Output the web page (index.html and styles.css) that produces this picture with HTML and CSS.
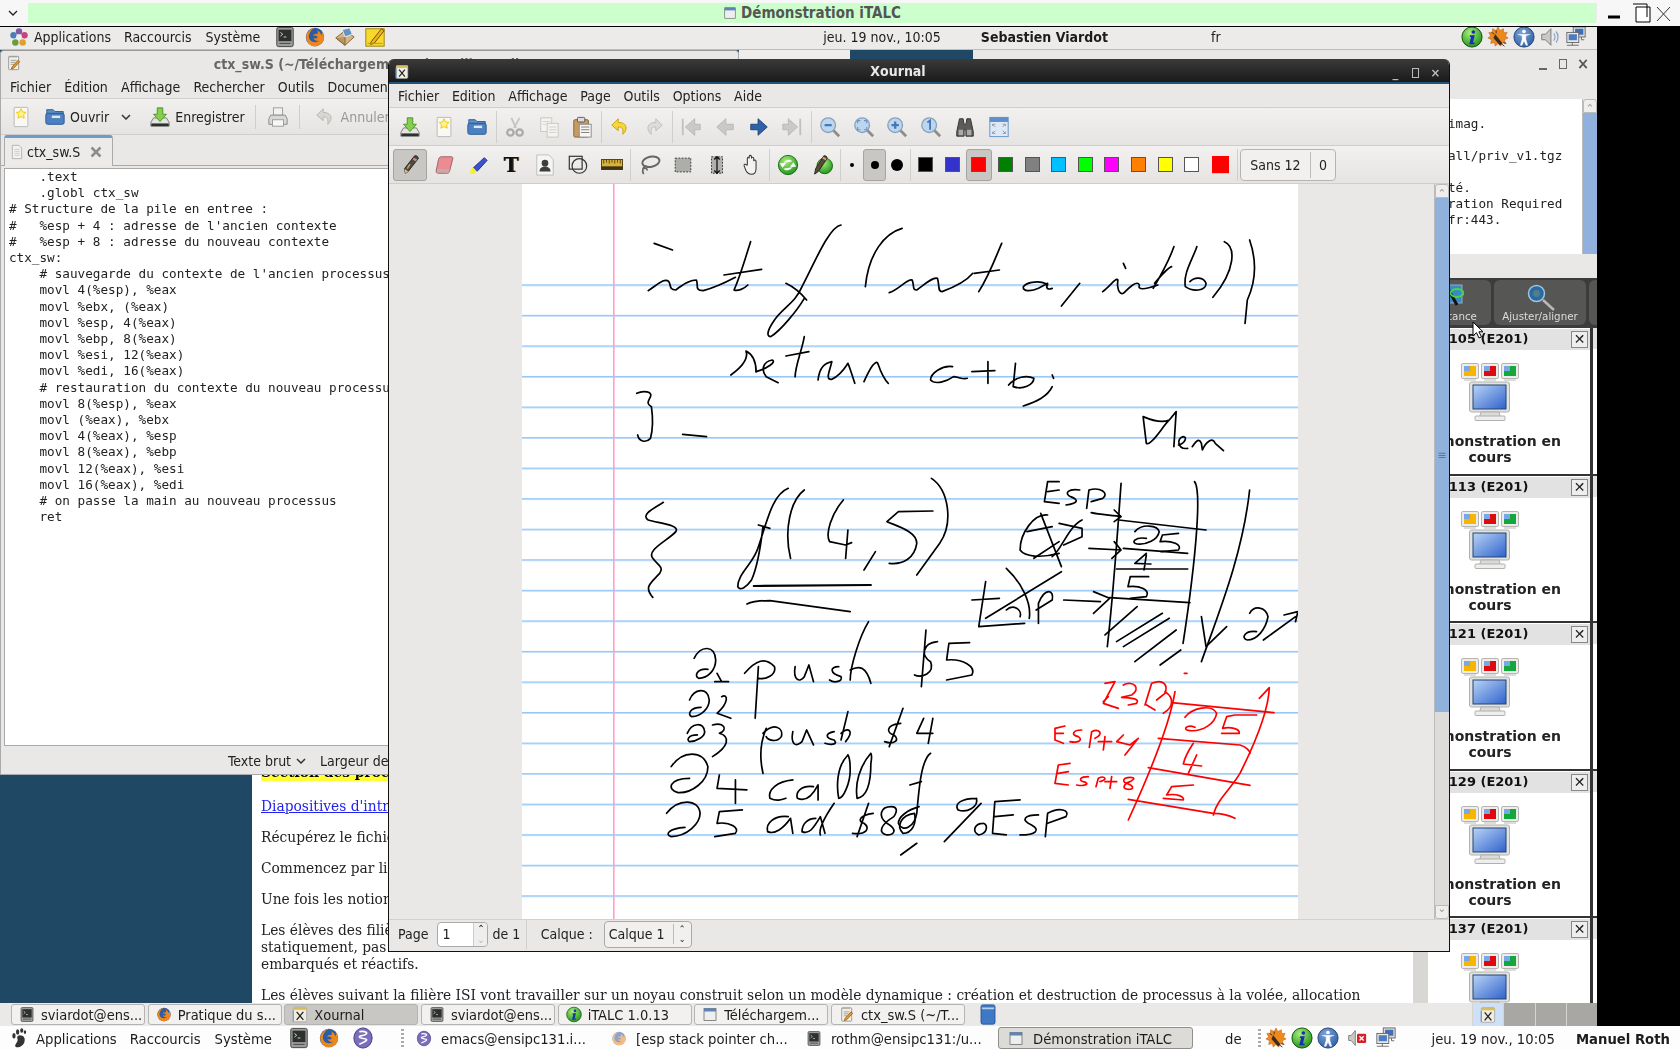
FILE: index.html
```html
<!DOCTYPE html>
<html lang="fr">
<head>
<meta charset="utf-8">
<title>Démonstration iTALC</title>
<link rel="stylesheet" href="styles.css">
</head>
<body>
<svg class="defs" aria-hidden="true">
<defs>
<linearGradient id="gBlue" x1="0" y1="0" x2="1" y2="1"><stop offset="0" stop-color="#b9d4f6"/><stop offset="1" stop-color="#2f62cc"/></linearGradient>
<radialGradient id="gGreen" cx=".4" cy=".3" r=".8"><stop offset="0" stop-color="#a8ee7a"/><stop offset="1" stop-color="#138a12"/></radialGradient>
<radialGradient id="gAcc" cx=".4" cy=".3" r=".8"><stop offset="0" stop-color="#7da4d8"/><stop offset="1" stop-color="#2a5a9e"/></radialGradient>
<symbol id="s-term" viewBox="0 0 24 24"><rect x="3" y="1.500" width="18" height="21" rx="2" fill="#9b9c98" stroke="#3f3f3f"/><rect x="5" y="4" width="14" height="12.500" fill="#2c3130"/><path d="M7 7l2.500 2L7 11M10.500 12h3" stroke="#ddd" fill="none"/><path d="M6 19h12" stroke="#444"/></symbol>
<symbol id="s-ff" viewBox="0 0 24 24"><circle cx="12" cy="12" r="10" fill="#2b5ca6"/><path d="M12 2C6 3 2 8 2.500 13c.6 5.500 5 9.500 10 9 5.500-.3 9.500-4.500 9.300-10-.2-2.500-1.200-4.300-2.400-5.800.3 1.600.1 3-.5 4-.7-2.700-2.500-4.800-4.400-5.400.8 1.600 1 3.200-.5 4.200-1.800-.5-3.600 0-4.200 1.600 1.700-.6 4.200 0 5.300 1.600-1 1.500-3.200 1.600-4.700 1 .5 2.100 3.100 3.500 5.800 3-2.200 2.100-6.200 2.100-8.800 0-2.200-2-2.700-5-1.600-7.700.5-1.300 1.600-3 2.700-4.500z" fill="#ef861c"/></symbol>
<symbol id="s-pkg" viewBox="0 0 24 24"><path d="M2 13l10-8 10 7-10 9z" fill="#d8b486" stroke="#7f6238"/><path d="M9 4l8-2 3 7-8 3z" fill="#5f94c4" stroke="#eee"/><path d="M2 13l10 8V12" fill="#bd9460" stroke="#7f6238"/></symbol>
<symbol id="s-note" viewBox="0 0 24 24"><rect x="2" y="3" width="20" height="19" fill="#f6d92a" stroke="#9a7f0a"/><path d="M8 17l11-14 3 2-11 14-4 1z" fill="#f0b020" stroke="#6a4a10"/><path d="M4 19h16" stroke="#b89a10"/></symbol>
<symbol id="s-gedit" viewBox="0 0 24 24"><rect x="4" y="2" width="15" height="20" rx="1" fill="#f4f1e4" stroke="#777"/><path d="M6 2v2M9 2v2M12 2v2M15 2v2M7 8h9M7 11h7M7 14h5" stroke="#777" fill="none"/><path d="M9 18l9-10 2.500 2-9 10-3.500 1z" fill="#ef9a1f" stroke="#7a4a10"/></symbol>
<symbol id="s-win" viewBox="0 0 24 24"><rect x="3" y="3" width="18" height="18" fill="#eee" stroke="#555"/><rect x="3" y="3" width="18" height="4.500" fill="#5b85b8"/></symbol>
<symbol id="s-apps" viewBox="0 0 24 24"><circle cx="12" cy="6" r="3.500" fill="#7d5aa8"/><circle cx="18" cy="10" r="3.500" fill="#c6437c"/><circle cx="16" cy="18" r="3.500" fill="#e0a030"/><circle cx="8" cy="18" r="3.500" fill="#6a9c3c"/><circle cx="6" cy="10" r="3.500" fill="#4a7fb5"/><circle cx="12" cy="12" r="3" fill="#eee"/></symbol>
<symbol id="s-foot" viewBox="0 0 24 24"><path d="M13 9c4 0 6 3 5 7-1 4-6 7-9 6-2-.6-1-3 .5-5 1.500-2 1-4 .5-5 0-2 1-3 3-3z" fill="#333"/><ellipse cx="6.500" cy="9.500" rx="1.800" ry="3" fill="#333"/><ellipse cx="10.500" cy="5.500" rx="1.800" ry="3" fill="#333"/><ellipse cx="15" cy="3.800" rx="1.700" ry="2.500" fill="#333"/><ellipse cx="18.500" cy="5.500" rx="1.300" ry="2" fill="#333"/></symbol>
<symbol id="s-emacs" viewBox="0 0 24 24"><ellipse cx="12" cy="12" rx="10" ry="11" fill="#7a6dba" stroke="#453a86"/><path d="M8 5c6-1 10 1 7 3s-7 1-7 3 8 1 8 3-6 3-8 5" fill="none" stroke="#fff" stroke-width="1.800"/></symbol>
<symbol id="s-info" viewBox="0 0 24 24"><circle cx="12" cy="12" r="11" fill="url(#gGreen)" stroke="#0a4a0a"/><circle cx="13.500" cy="6.500" r="2" fill="#1b2fb0"/><path d="M10 10h5l-2 8h2l-.5 2H9l2-8H9.500z" fill="#1b2fb0"/></symbol>
<symbol id="s-bug" viewBox="0 0 24 24"><path d="M12 1l2 4 4-2 0 4 4 0-2 4 3 2-4 2 1 4-4-1-1 4-3-3-3 3-1-4-4 1 1-4-4-2 3-2-2-4 4 0 0-4 4 2z" fill="#ee8a1c" stroke="#c4601a" stroke-width=".6"/><path d="M9 9l8 10-3 2-7-8z" fill="#3a2c22"/><path d="M8 9L5 7M10 8l0-3M15 19l4 3M18 18l3 1" stroke="#3a2c22"/></symbol>
<symbol id="s-acc" viewBox="0 0 24 24"><circle cx="12" cy="12" r="11" fill="url(#gAcc)" stroke="#1d3f78"/><circle cx="12" cy="6" r="2" fill="#fff"/><path d="M5 9l5 1.500v4L8 21h1.800l2.200-5 2.200 5H16l-2-6.500v-4L19 9" fill="#fff" stroke="#fff" stroke-width=".5" stroke-linejoin="round"/></symbol>
<symbol id="s-sound" viewBox="0 0 24 24"><path d="M3 9h4l6-6v18l-6-6H3z" fill="#c9c9c6" stroke="#777"/><path d="M16 8c2 2 2 6 0 8M18.500 6c3 3 3 9 0 12" stroke="#7d9dc8" fill="none" stroke-width="1.200"/></symbol>
<symbol id="s-mute" viewBox="0 0 24 24"><path d="M2 9h3l5-6v18l-5-6H2z" fill="#c9c9c6" stroke="#777"/><rect x="12" y="7" width="11" height="11" rx="1.500" fill="#d3222a"/><path d="M15 10l5 5M20 10l-5 5" stroke="#fff" stroke-width="1.600"/></symbol>
<symbol id="s-net" viewBox="0 0 24 24"><rect x="9" y="1" width="13" height="11" fill="#dcdcdc" stroke="#666"/><rect x="11" y="3" width="9" height="6.500" fill="#3f6fb4"/><rect x="2" y="7" width="13" height="11" fill="#e8e8e8" stroke="#666"/><rect x="4" y="9" width="9" height="6.500" fill="#4a7cc2"/><path d="M2 21h13M8 18v3M18 12v3h3" stroke="#666" fill="none"/></symbol>
<symbol id="s-new" viewBox="0 0 24 24"><rect x="4.500" y="1.500" width="15" height="21" rx="1" fill="#f8f8f5" stroke="#b5b5b2"/><path d="M12 3l1.800 3.500 3.700.5-2.700 2.600.7 3.700-3.500-1.800-3.400 1.800.7-3.700L6.800 7l3.700-.5z" fill="#fff48a" stroke="#f2c500"/></symbol>
<symbol id="s-open" viewBox="0 0 24 24"><path d="M3 6V4h7l2 2h9v5H3z" fill="#5d8cc6" stroke="#2d5c98"/><rect x="2" y="8" width="20" height="12" rx="2" fill="#4a80c4" stroke="#28568e"/><rect x="8" y="10" width="10" height="3.500" fill="#dbe7f3" stroke="#315f96" stroke-width=".5"/></symbol>
<symbol id="s-save" viewBox="0 0 24 24"><path d="M5 13h14l3 5v4H2v-4z" fill="#e4e4e0" stroke="#777"/><rect x="2.500" y="19" width="19" height="3" fill="#2f3130"/><path d="M9 2h6v7h4l-7 8-7-8h4z" fill="#84d04e" stroke="#4b8f23"/></symbol>
<symbol id="s-print" viewBox="0 0 24 24"><rect x="7" y="2" width="10" height="8" fill="#f2f2f0" stroke="#999"/><path d="M4 10h16l2 4v6H2v-6z" fill="#d8d8d4" stroke="#888"/><rect x="6" y="15" width="12" height="7" fill="#f7f7f5" stroke="#999"/></symbol>
<symbol id="s-undog" viewBox="0 0 24 24"><path d="M10 3L3 10l7 6v-4c4-.5 6 2 5 8 5-4 6-13-5-13z" fill="#d6d6d2" stroke="#b5b5b1"/></symbol>
<symbol id="s-undo" viewBox="0 0 24 24"><path d="M10 3L3 10l7 6v-4c4-.5 6 2 5 8 5-4 6-13-5-13z" fill="#f6d63a" stroke="#c79c10"/></symbol>
<symbol id="s-redo" viewBox="0 0 24 24"><path d="M14 3l7 7-7 6v-4c-4-.5-6 2-5 8-5-4-6-13 5-13z" fill="#dcdcd8" stroke="#bcbcb8"/></symbol>
<symbol id="s-cut" viewBox="0 0 24 24"><path d="M8 2l5 11M17 2l-6 11" stroke="#c4c4c0" stroke-width="2"/><circle cx="7" cy="18" r="3.500" fill="none" stroke="#aaa" stroke-width="2.500"/><circle cx="17" cy="18" r="3.500" fill="none" stroke="#aaa" stroke-width="2.500"/></symbol>
<symbol id="s-copy" viewBox="0 0 24 24"><rect x="3" y="2" width="12" height="15" fill="#f3f3f0" stroke="#c5c5c1"/><rect x="10" y="8" width="12" height="15" fill="#f3f3f0" stroke="#c5c5c1"/><path d="M5 6h8M5 9h4M12 12h8M12 15h8M12 18h8" stroke="#cfcfcb"/></symbol>
<symbol id="s-paste" viewBox="0 0 24 24"><rect x="3" y="4" width="16" height="19" rx="1.500" fill="#c79a62" stroke="#7f6238"/><rect x="7" y="1.500" width="8" height="5" rx="1" fill="#ddd" stroke="#555"/><rect x="9" y="9" width="13" height="14" fill="#f6f6f3" stroke="#888"/><path d="M11 12h9M11 15h9M11 18h9" stroke="#777"/></symbol>
<symbol id="s-first" viewBox="0 0 24 24"><path d="M3 3v18" stroke="#c0c0bc" stroke-width="2"/><path d="M16 3v6h6v6h-6v6L6 12z" fill="#c9c9c6" stroke="#b7b7b3"/></symbol>
<symbol id="s-prev" viewBox="0 0 24 24"><path d="M13 3v6h8v6h-8v6L3 12z" fill="#c9c9c6" stroke="#b7b7b3"/></symbol>
<symbol id="s-next" viewBox="0 0 24 24"><path d="M11 3v6H3v6h8v6l10-9z" fill="#2d62a8" stroke="#1c4278"/></symbol>
<symbol id="s-last" viewBox="0 0 24 24"><path d="M21 3v18" stroke="#c0c0bc" stroke-width="2"/><path d="M8 3v6H2v6h6v6l10-9z" fill="#c9c9c6" stroke="#b7b7b3"/></symbol>
<symbol id="s-zout" viewBox="0 0 24 24"><path d="M15 15l7 7" stroke="#8d8d8a" stroke-width="3"/><circle cx="10" cy="10" r="8" fill="#bcd6f0" stroke="#8da3ba" stroke-width="1.500"/><rect x="6" y="8.700" width="8" height="2.600" rx="1" fill="#4578b4"/></symbol>
<symbol id="s-zin" viewBox="0 0 24 24"><path d="M15 15l7 7" stroke="#8d8d8a" stroke-width="3"/><circle cx="10" cy="10" r="8" fill="#bcd6f0" stroke="#8da3ba" stroke-width="1.500"/><path d="M6 10h8M10 6v8" stroke="#4578b4" stroke-width="2.600"/></symbol>
<symbol id="s-zfit" viewBox="0 0 24 24"><path d="M15 15l7 7" stroke="#8d8d8a" stroke-width="3"/><circle cx="10" cy="10" r="8" fill="#bcd6f0" stroke="#8da3ba" stroke-width="1.500"/><path d="M5 8V5h3M12 5h3v3M15 12v3h-3M8 15H5v-3" fill="none" stroke="#6d94c2" stroke-width="1.300"/></symbol>
<symbol id="s-z1" viewBox="0 0 24 24"><path d="M15 15l7 7" stroke="#8d8d8a" stroke-width="3"/><circle cx="10" cy="10" r="8" fill="#bcd6f0" stroke="#8da3ba" stroke-width="1.500"/><path d="M8 7l3-2v10" fill="none" stroke="#4578b4" stroke-width="2"/></symbol>
<symbol id="s-bino" viewBox="0 0 24 24"><path d="M6 3h4l1 6h2l1-6h4l3 14v5h-8v-7h-2v7H3v-5z" fill="#5b5b58" stroke="#2f2f2e"/><rect x="5" y="15" width="5" height="6" fill="#aaa"/><rect x="14" y="15" width="5" height="6" fill="#aaa"/></symbol>
<symbol id="s-full" viewBox="0 0 24 24"><rect x="2" y="1.500" width="20" height="21" fill="#dfe9f5" stroke="#5f8fc7"/><rect x="2" y="1.500" width="20" height="5" fill="#5f8fc7"/><path d="M5 11V9h3M16 9h3v2M19 17v2h-3M8 19H5v-2M5 9l3 3M19 9l-3 3M19 19l-3-3M5 19l3-3" stroke="#8a9aac" fill="none"/></symbol>
<symbol id="s-pen" viewBox="0 0 24 24"><path d="M7 21l-1-5L17 2c2-.6 4 .6 4 3L10 19z" fill="#4a4a46" stroke="#222"/><path d="M16 4l4 2-2 2-3-2z" fill="#d98a7a"/><path d="M7 21l-1-5 4 3z" fill="#e8c08a"/><path d="M12 11l-3 5" stroke="#d8a848" stroke-width="1.500"/></symbol>
<symbol id="s-eraser" viewBox="0 0 24 24"><path d="M9 3h11c1.500 0 2 1 1.500 2.500L18 19c-.4 1.500-1.500 2-3 2H6c-2 0-3-1-2.500-3L6 6c.5-2 1.500-3 3-3z" fill="#ea8c92" stroke="#9b5d60"/><path d="M5 16l13 .5-1 4H4z" fill="#c9a8a8"/></symbol>
<symbol id="s-hl" viewBox="0 0 24 24"><path d="M8 15L20 4l3 3-11 12z" fill="#3a52cf" stroke="#1f2d8a"/><path d="M4 20l3-6 5 5-5 3z" fill="#f6f02c"/></symbol>
<symbol id="s-img" viewBox="0 0 24 24"><path d="M3 1h13l5 5v17H3z" fill="#f5f5f2" stroke="#bbb"/><circle cx="12" cy="10" r="3.600" fill="#3e3e3c"/><path d="M6 19c0-4 3-5.500 6-5.500s6 1.500 6 5.500z" fill="#3e3e3c"/></symbol>
<symbol id="s-shape" viewBox="0 0 24 24"><rect x="2.500" y="2.500" width="14" height="14" fill="none" stroke="#333" stroke-width="1.300"/><circle cx="13.500" cy="13" r="8" fill="none" stroke="#333" stroke-width="1.300"/></symbol>
<symbol id="s-ruler" viewBox="0 0 24 12"><rect x=".5" y=".5" width="23" height="11" fill="#d8b23a" stroke="#4a3c10"/><path d="M3 1v4M6 1v3M9 1v4M12 1v3M15 1v4M18 1v3M21 1v4" stroke="#5a4810" fill="none"/><rect x=".5" y="8" width="23" height="3.500" fill="#3d3512"/></symbol>
<symbol id="s-lasso" viewBox="0 0 24 24"><ellipse cx="13" cy="8.500" rx="9.500" ry="5.500" fill="none" stroke="#666" stroke-width="2.200" transform="rotate(-12 13 8.500)"/><path d="M8 13c-4 1-5 5-3 9M5 16c2-1 4 0 4 2" fill="none" stroke="#666" stroke-width="1.800"/></symbol>
<symbol id="s-rect" viewBox="0 0 24 24"><rect x="3.500" y="4.500" width="17" height="15" fill="#adadaa" stroke="#333" stroke-dasharray="2 1.500"/></symbol>
<symbol id="s-vsp" viewBox="0 0 24 24"><rect x="6" y="3" width="12" height="18" fill="#b0b0ad" stroke="#333" stroke-dasharray="2 1.500"/><path d="M12 3v18M9 6l3-3 3 3M9 18l3 3 3-3" fill="none" stroke="#111" stroke-width="1.400"/></symbol>
<symbol id="s-hand" viewBox="0 0 24 24"><path d="M8 12V5c0-2 2-2 2 0V3c0-2 2.500-2 2.500 0v2c0-2 2.500-2 2.500 0v3c0-2 2.500-2 2.500 0v8c0 4-2 6-5 6-4 0-5-2-6-4l-2-5c-.5-2 1.500-2.500 2.500-1z" fill="#f2f2f0" stroke="#333" stroke-width="1.100"/></symbol>
<symbol id="s-ref" viewBox="0 0 24 24"><circle cx="12" cy="12" r="10.500" fill="url(#gGreen)" stroke="#136a13"/><path d="M17 8c-3-3-8-2-10 2h3l-4 5-3-5h2M7 16c3 3 8 2 10-2h-3l4-5 3 5h-2" fill="#fff"/></symbol>
<symbol id="s-pend" viewBox="0 0 24 24"><circle cx="15" cy="13" r="8.500" fill="url(#gGreen)" stroke="#136a13"/><path d="M4 22l1-6L14 2c2-.5 4 .8 3.500 3L8 19z" fill="#5a4a36" stroke="#222"/><path d="M13 4l3.500 2" stroke="#e0a070" stroke-width="2"/></symbol>
<symbol id="s-xapp" viewBox="0 0 24 24"><rect x="2" y="1" width="20" height="22" rx="2" fill="#f0ede0" stroke="#999"/><rect x="2" y="1" width="20" height="4" fill="#d8bd5a"/><path d="M7 8l10 12M17 8L7 20" stroke="#222" stroke-width="2"/><path d="M2 6v17" stroke="#7aa0d0" stroke-width="2"/></symbol>
<symbol id="s-trash" viewBox="0 0 18 24"><rect x="1" y="1" width="16" height="22" rx="2" fill="#3f79c6" stroke="#245494"/><rect x="2" y="4" width="14" height="2" fill="#b5cfee"/></symbol>
<symbol id="s-doc" viewBox="0 0 24 24"><path d="M5 2h10l4 4v16H5z" fill="#f2f2ef" stroke="#999"/><path d="M8 8h8M8 11h8M8 14h8M8 17h8" stroke="#bbb"/></symbol>
<symbol id="s-mag" viewBox="0 0 30 30"><path d="M17 17l11 10" stroke="#b9b9b6" stroke-width="2.500"/><circle cx="10.500" cy="10.500" r="8" fill="#2b6aa0" stroke="#9fc4e0" stroke-width="1.500"/><circle cx="10.500" cy="10.500" r="3.500" fill="#4f7f8a"/></symbol>
<symbol id="s-asst" viewBox="0 0 16 28"><rect x="0" y="2" width="14" height="18" fill="#3a8ac0" stroke="#9ac"/><path d="M0 6l9 16" stroke="#111" stroke-width="3"/><ellipse cx="9" cy="10" rx="6.500" ry="4" fill="none" stroke="#43d44b" stroke-width="1.800"/></symbol>
<symbol id="s-mon" viewBox="0 0 58 60"><g stroke="#b5b5b2" stroke-width="1"><rect x=".5" y=".5" width="17" height="15" rx="1.500" fill="#ececea"/><rect x="20.500" y=".5" width="17" height="15" rx="1.500" fill="#ececea"/><rect x="40.500" y=".5" width="17" height="15" rx="1.500" fill="#ececea"/></g><rect x="3" y="3" width="12" height="10" fill="#f7b500"/><rect x="3" y="3" width="6" height="5" fill="#7aa7e6"/><rect x="23" y="3" width="12" height="10" fill="#dd0b10"/><rect x="23" y="3" width="6" height="5" fill="#7aa7e6"/><rect x="43" y="3" width="12" height="10" fill="#12a83b"/><rect x="43" y="3" width="6" height="5" fill="#7aa7e6"/><path d="M3 16h12v2H3zM23 16h12v2H23zM43 16h12v2H43z" fill="#ddd"/><rect x="8.500" y="19" width="40" height="30" rx="2" fill="#e2e2e0" stroke="#b0b0ad"/><rect x="12" y="22" width="33" height="24" fill="url(#gBlue)" stroke="#24456e"/><path d="M20 49h18l2 7H18z" fill="#dadad8" stroke="#b0b0ad"/><rect x="14" y="53" width="30" height="4.500" rx="1" fill="#eee" stroke="#b0b0ad"/></symbol>
</defs>
</svg>

<div class="screen">
  <header class="vnc">
    <svg class="vnc-chev" viewBox="0 0 10 6"><path d="M1 1l4 4 4-4" fill="none" stroke="#222" stroke-width="1.300"/></svg>
    <div class="vnc-title"><svg class="vnc-ic"><use href="#s-win"/></svg><b>Démonstration iTALC</b></div>
    <svg class="vnc-btns" viewBox="0 0 80 26"><path d="M0 4v17" stroke="#ddd"/><path d="M12 18h12" stroke="#000" stroke-width="3"/><path d="M37 5h14v13M40 8h14v15H40z" fill="#fff" stroke="#000"/><path d="M61 8l13 14M74 8L61 22" stroke="#333" fill="none"/></svg>
  </header>

  <main class="remote">
    <div class="panel ptop">
      <svg class="pi ml8"><use href="#s-apps"/></svg>
      <span class="ml4">Applications</span>
      <span class="ml13">Raccourcis</span>
      <span class="ml14">Système</span>
      <svg class="pi ml14"><use href="#s-term"/></svg>
      <svg class="pi ml8"><use href="#s-ff"/></svg>
      <svg class="pi ml8"><use href="#s-pkg"/></svg>
      <svg class="pi ml8"><use href="#s-note"/></svg>
      <span class="ptime">jeu. 19 nov., 10:05</span>
      <b class="puser">Sebastien Viardot</b>
      <span class="plang">fr</span>
      <svg class="pi pinfo"><use href="#s-info"/></svg>
      <svg class="pi ml4"><use href="#s-bug"/></svg>
      <svg class="pi ml4"><use href="#s-acc"/></svg>
      <svg class="pi ml4"><use href="#s-sound"/></svg>
      <svg class="pi ml4"><use href="#s-net"/></svg>
    </div>

    <div class="workspace">
      <section class="win italc">
        <div class="italc-bar">
          <div class="italc-btn b1"><svg class="asst"><use href="#s-asst"/></svg><span>Assistance</span></div>
          <div class="italc-btn b2"><svg class="mag"><use href="#s-mag"/></svg><span>Ajuster/aligner</span></div>
          <div class="italc-btn b3"></div>
        </div>
        <div class="tiles">
          <article class="tile"><header>ensipt105 (E201)<i class="tx">✕</i></header><div class="tbody"><svg class="mon"><use href="#s-mon"/></svg><b>Démonstration en cours</b></div></article>
          <article class="tile"></article>
          <article class="tile"><header>ensipt113 (E201)<i class="tx">✕</i></header><div class="tbody"><svg class="mon"><use href="#s-mon"/></svg><b>Démonstration en cours</b></div></article>
          <article class="tile"></article>
          <article class="tile"><header>ensipt121 (E201)<i class="tx">✕</i></header><div class="tbody"><svg class="mon"><use href="#s-mon"/></svg><b>Démonstration en cours</b></div></article>
          <article class="tile"></article>
          <article class="tile"><header>ensipt129 (E201)<i class="tx">✕</i></header><div class="tbody"><svg class="mon"><use href="#s-mon"/></svg><b>Démonstration en cours</b></div></article>
          <article class="tile"></article>
          <article class="tile"><header>ensipt137 (E201)<i class="tx">✕</i></header><div class="tbody"><svg class="mon"><use href="#s-mon"/></svg><b>Démonstration en cours</b></div></article>
          <article class="tile"></article>
        </div>
      </section>

      <section class="win browser">
        <div class="b-content">
          <h3><mark>Section des processus</mark></h3>
          <p><a href="#">Diapositives d'introduction</a></p>
          <p>Récupérez le fichier</p>
          <p>Commencez par lire</p>
          <p>Une fois les notions</p>
          <p>Les élèves des filières<br>statiquement, pas<br>embarqués et réactifs.</p>
          <p>Les élèves suivant la filière ISI vont travailler sur un noyau construit selon un modèle dynamique : création et destruction de processus à la volée, allocation</p>
        </div>
        <div class="b-scroll"></div>
      </section>

      <div class="win strip"></div>

      <section class="win term">
        <div class="term-head"><i class="wb mn"></i><i class="wb sq"></i><span class="wb xb">×</span></div>
        <div class="term-body">
          <pre>imag.

all/priv_v1.tgz

té.
ration Required
fr:443.</pre>
          <div class="scroll-t"><span class="sb-btn">⌃</span><span class="sb-thumb"></span></div>
        </div>
      </section>

      <section class="win gedit">
        <div class="g-title"><svg class="gi"><use href="#s-gedit"/></svg><b>ctx_sw.S (~/Téléchargements/install) - gedit</b></div>
        <nav class="g-menu"><span>Fichier</span><span>Édition</span><span>Affichage</span><span>Rechercher</span><span>Outils</span><span>Documents</span></nav>
        <div class="g-tools">
          <svg class="ti"><use href="#s-new"/></svg>
          <svg class="ti g-open"><use href="#s-open"/></svg><span class="g-l1">Ouvrir</span>
          <svg class="g-ch" viewBox="0 0 10 6"><path d="M1 1l4 4 4-4" fill="none" stroke="#333" stroke-width="1.500"/></svg>
          <svg class="ti g-sv"><use href="#s-save"/></svg><span class="g-l2">Enregistrer</span>
          <i class="sep g-s1"></i>
          <svg class="ti g-pr"><use href="#s-print"/></svg>
          <i class="sep g-s2"></i>
          <svg class="ti g-un"><use href="#s-undog"/></svg><span class="g-l3">Annuler</span>
        </div>
        <div class="g-tabs"><div class="g-tab"><svg class="tabi"><use href="#s-doc"/></svg><span>ctx_sw.S</span><svg class="tabx" viewBox="0 0 12 12"><path d="M1.500 1.500l9 9M10.500 1.500l-9 9" stroke="#8d8d8a" stroke-width="2.500"/></svg></div></div>
        <div class="g-edit"><pre>    .text
    .globl ctx_sw
# Structure de la pile en entree :
#   %esp + 4 : adresse de l'ancien contexte
#   %esp + 8 : adresse du nouveau contexte
ctx_sw:
    # sauvegarde du contexte de l'ancien processus
    movl 4(%esp), %eax
    movl %ebx, (%eax)
    movl %esp, 4(%eax)
    movl %ebp, 8(%eax)
    movl %esi, 12(%eax)
    movl %edi, 16(%eax)
    # restauration du contexte du nouveau processus
    movl 8(%esp), %eax
    movl (%eax), %ebx
    movl 4(%eax), %esp
    movl 8(%eax), %ebp
    movl 12(%eax), %esi
    movl 16(%eax), %edi
    # on passe la main au nouveau processus
    ret</pre></div>
        <div class="g-status"><span>Texte brut</span><svg class="g-ch2" viewBox="0 0 10 6"><path d="M1 1l4 4 4-4" fill="none" stroke="#333" stroke-width="1.500"/></svg><span class="g-wd">Largeur de tabulation : 8</span></div>
      </section>

      <section class="win xournal">
        <div class="x-title"><svg class="xi"><use href="#s-xapp"/></svg><b>Xournal</b><div class="x-wb"><span>_</span><span class="sq"></span><span>×</span></div></div>
        <nav class="x-menu"><span>Fichier</span><span>Edition</span><span>Affichage</span><span>Page</span><span>Outils</span><span>Options</span><span>Aide</span></nav>
        <div class="x-tb t1">
          <button class="tb"><svg><use href="#s-save"/></svg></button><button class="tb"><svg><use href="#s-new"/></svg></button><button class="tb"><svg><use href="#s-open"/></svg></button><i class="vs"></i>
          <button class="tb"><svg><use href="#s-cut"/></svg></button><button class="tb"><svg><use href="#s-copy"/></svg></button><button class="tb"><svg><use href="#s-paste"/></svg></button><i class="vs"></i>
          <button class="tb"><svg><use href="#s-undo"/></svg></button><button class="tb"><svg><use href="#s-redo"/></svg></button><i class="vs"></i>
          <button class="tb"><svg><use href="#s-first"/></svg></button><button class="tb"><svg><use href="#s-prev"/></svg></button><button class="tb"><svg><use href="#s-next"/></svg></button><button class="tb"><svg><use href="#s-last"/></svg></button><i class="vs"></i>
          <button class="tb"><svg><use href="#s-zout"/></svg></button><button class="tb"><svg><use href="#s-zfit"/></svg></button><button class="tb"><svg><use href="#s-zin"/></svg></button><button class="tb"><svg><use href="#s-z1"/></svg></button><button class="tb"><svg><use href="#s-bino"/></svg></button><button class="tb"><svg><use href="#s-full"/></svg></button>
        </div>
        <div class="x-tb t2">
          <button class="tb on"><svg><use href="#s-pen"/></svg></button><button class="tb"><svg><use href="#s-eraser"/></svg></button><button class="tb"><svg><use href="#s-hl"/></svg></button><button class="tb tt">T</button><button class="tb"><svg><use href="#s-img"/></svg></button><button class="tb"><svg><use href="#s-shape"/></svg></button><button class="tb"><svg class="rul"><use href="#s-ruler"/></svg></button><i class="vs"></i>
          <button class="tb"><svg><use href="#s-lasso"/></svg></button><button class="tb"><svg><use href="#s-rect"/></svg></button><button class="tb"><svg><use href="#s-vsp"/></svg></button><button class="tb"><svg><use href="#s-hand"/></svg></button><i class="vs"></i>
          <button class="tb"><svg><use href="#s-ref"/></svg></button><button class="tb"><svg><use href="#s-pend"/></svg></button><i class="vs narrow"></i>
          <button class="dotb"><i class="dot d1"></i></button><button class="dotb on"><i class="dot d2"></i></button><button class="dotb"><i class="dot d3"></i></button><i class="vs"></i>
          <button class="col"><i class="c-black"></i></button><button class="col"><i class="c-blue"></i></button><button class="col on"><i class="c-red"></i></button><button class="col"><i class="c-green"></i></button><button class="col"><i class="c-gray"></i></button><button class="col"><i class="c-cyan"></i></button><button class="col"><i class="c-lime"></i></button><button class="col"><i class="c-mag"></i></button><button class="col"><i class="c-orange"></i></button><button class="col"><i class="c-yellow"></i></button><button class="col"><i class="c-white"></i></button>
          <button class="col bigc"><i class="c-red"></i></button><i class="vs"></i>
          <button class="fontb"><span>Sans 12</span><em>0</em></button>
        </div>
        <div class="x-view">
          <div class="x-canvas">
            <svg class="page" viewBox="522 184 776 736">
              <defs><pattern id="rl" x="522" y="284.300" width="776" height="30.550" patternUnits="userSpaceOnUse"><rect width="776" height="1.600" fill="#96c7f7"/></pattern></defs>
              <rect x="522" y="184" width="776" height="736" fill="#fff"/>
              <rect x="522" y="284" width="776" height="636" fill="url(#rl)"/>
              <rect x="613" y="184" width="1.600" height="736" fill="#ff9fce"/>
              <g class="ink" transform="translate(600 220) scale(.4591 .3333)">
                <path d="M118 70L158 90"/>
                <path d="M105 212C125 195 140 172 150 185C155 195 150 210 165 210C180 195 195 180 210 180C215 195 205 212 225 212C245 205 270 190 295 172"/>
                <path d="M328 65C320 100 305 170 292 210C300 215 315 205 322 195M270 165L352 148"/>
                <path d="M525 15C500 20 470 120 440 200C425 250 400 260 380 300C360 340 365 350 372 350C395 330 430 270 445 235M405 190C420 200 435 215 450 240"/>
                <path d="M658 25C620 40 585 100 578 200"/>
                <path d="M630 218C650 210 670 175 680 180C685 200 680 210 690 210C710 190 725 170 735 175C740 195 735 215 745 215C775 200 800 180 812 160"/>
                <path d="M875 70C865 100 850 160 825 215M815 160L870 150"/>
                <path d="M975 195C960 180 930 185 922 200C920 215 940 215 955 205L975 190C970 205 975 210 985 205"/>
                <path d="M1045 190L1005 258"/>
                <path d="M1095 215C1110 200 1125 170 1128 180C1125 200 1130 225 1140 220C1155 200 1170 180 1175 195C1170 210 1185 210 1215 195M1140 130L1145 145"/>
                <path d="M1250 80C1240 120 1220 170 1205 205M1208 190C1220 170 1235 145 1245 140"/>
                <path d="M1300 80C1290 120 1270 160 1275 200C1290 215 1320 215 1320 190C1315 170 1295 170 1285 185"/>
                <path d="M1360 65C1385 80 1385 150 1335 232"/>
                <path d="M1415 60C1430 120 1430 180 1410 240L1405 310"/>
                <path d="M285 465C305 445 325 420 318 393C335 405 340 430 340 455"/>
                <path d="M340 455C365 445 385 425 375 420C355 425 350 450 362 470L388 488"/>
                <path d="M445 350C440 390 425 440 425 470M405 408L455 395"/>
                <path d="M475 480C478 440 490 430 505 425C500 455 490 480 505 478C525 465 535 440 540 430C545 445 550 470 555 490"/>
                <path d="M575 485C590 440 600 420 605 430C610 450 620 480 628 490"/>
                <path d="M768 440C745 435 720 460 720 480C730 495 755 485 770 470C780 470 790 480 800 475"/>
                <path d="M810 455L860 452M845 425L845 490"/>
                <path d="M905 430L900 500C920 510 945 495 945 475C930 465 905 470 890 495"/>
                <path d="M985 465L988 475M985 500C975 530 950 545 922 558"/>
                <path d="M80 520C95 510 115 515 110 530C105 545 100 550 112 560C115 590 115 630 110 655C100 670 85 665 82 645"/>
                <path d="M180 643L232 650"/>
                <path d="M1183 590C1200 600 1225 610 1240 600L1255 575L1250 680M1183 590L1190 670C1200 680 1225 620 1240 600"/>
                <path d="M1260 675C1275 670 1280 650 1270 650C1255 655 1258 690 1280 685"/>
                <path d="M1290 680C1300 660 1305 655 1310 670L1312 690C1320 665 1335 650 1340 670L1358 692"/>
              </g>
              <g class="ink" transform="translate(600 470) scale(.4591 .3333)">
                <path d="M138 97C110 120 90 135 105 150C130 160 175 165 165 185C150 210 100 240 115 265C125 285 140 290 130 310C110 340 95 350 115 382"/>
                <path d="M410 55C375 75 365 150 345 230C335 280 300 310 300 350C305 365 320 350 330 330C340 300 350 230 355 170M345 165L370 175"/>
                <path d="M445 60C415 90 400 180 415 265"/>
                <path d="M530 90C505 130 490 190 500 215L535 225L548 218M540 180L535 265"/>
                <path d="M600 245L575 300"/>
                <path d="M725 123L650 125L625 155C650 170 690 185 690 220C685 265 660 285 630 280"/>
                <path d="M722 25C760 60 770 160 740 220L690 315"/>
                <path d="M335 348L590 345" class="thick"/>
                <path d="M320 402C330 395 345 392 370 392L545 425"/>
                <path d="M1000 35L975 35L968 95L1000 100M975 65L1000 60"/>
                <path d="M1045 60C1020 55 1010 70 1025 80C1045 90 1040 100 1015 105"/>
                <path d="M1060 115L1065 60C1090 50 1110 70 1095 85L1070 95"/>
                <path d="M1135 40C1130 130 1120 350 1105 530"/>
                <path d="M1295 35C1310 60 1300 250 1270 520"/>
                <path d="M1415 60C1400 250 1350 420 1310 575"/>
                <path d="M1070 128C1090 135 1120 135 1135 140M1120 120L1135 140L1120 155"/>
                <path d="M1130 150L1320 180"/>
                <path d="M1165 185C1180 160 1215 165 1218 185C1215 210 1190 225 1170 222C1155 218 1165 200 1190 205"/>
                <path d="M1260 190L1225 195L1220 215C1245 210 1270 225 1260 240L1222 245"/>
                <path d="M1140 235L1280 250"/>
                <path d="M1190 250L1165 280L1200 282M1190 255L1185 300"/>
                <path d="M1125 297L1280 297"/>
                <path d="M1195 320L1155 320L1150 350C1175 345 1200 360 1190 380L1155 385"/>
                <path d="M1110 383L1285 398"/>
                <path d="M1065 235L1135 240M1120 215L1135 240L1115 265"/>
                <path d="M975 135C945 130 915 190 915 240C925 260 960 265 1000 250M930 185L985 170"/>
                <path d="M960 130L1005 290M1050 150C1020 170 1005 240 985 260M1000 160L1050 175L1050 200L1010 225M945 265L1000 215"/>
                <path d="M840 335L825 470L925 460M810 390L870 385"/>
                <path d="M885 295C920 340 940 400 935 445M840 445L1005 305M885 420C900 400 920 420 915 440"/>
                <path d="M955 460L955 400C970 350 990 360 985 390L950 420"/>
                <path d="M1010 390L1090 395M1075 365L1110 385L1075 430"/>
                <path d="M1100 495L1170 410M1125 515L1225 430M1140 530L1240 445M1165 575L1255 480M1220 585L1265 540"/>
                <path d="M1310 440L1320 530L1365 470"/>
                <path d="M1415 430C1425 405 1450 410 1455 440C1450 480 1430 510 1410 510C1395 505 1405 480 1430 485M1445 510L1515 440M1490 435L1520 425L1515 455"/>
                <path d="M205 565C220 525 250 525 252 570C252 600 235 625 215 625C205 620 210 595 235 598M255 610L265 635M250 635L280 635"/>
                <path d="M315 610C340 570 360 560 380 590C385 615 360 630 345 625M345 590L338 745"/>
                <path d="M425 590C420 630 435 640 445 620L455 585L465 635"/>
                <path d="M520 590C500 590 500 610 525 620C530 635 510 640 500 630"/>
                <path d="M585 455C565 500 545 590 545 630M545 600C565 585 580 590 590 640"/>
                <path d="M710 480L700 650M735 515C700 520 700 560 720 575C730 610 700 625 685 615"/>
                <path d="M805 518L760 520L755 570C790 565 820 590 810 615L755 630"/>
                <path d="M195 690C205 655 235 650 238 690C238 715 220 740 200 740C190 735 195 712 220 712M265 680C280 670 280 700 255 730L285 745"/>
                <path d="M190 790C200 758 225 755 228 785C228 800 210 815 195 815C188 810 192 795 212 795M245 765C270 755 280 780 260 790C285 800 280 830 245 860"/>
                <path d="M355 790C380 755 400 775 395 800C385 820 365 810 362 800M362 775C345 830 350 880 355 910"/>
                <path d="M420 785C415 820 425 835 440 815L450 780L465 825"/>
                <path d="M510 785C490 790 490 805 510 810C520 825 500 825 490 820"/>
                <path d="M540 725L525 810M525 790C540 770 555 780 535 815"/>
                <path d="M660 715L630 830M655 760C620 765 625 790 640 795C655 810 640 825 620 815"/>
                <path d="M705 745L690 790L725 790M725 745L715 820"/>
                <path d="M155 890C180 840 225 840 235 890C235 935 200 970 170 968C145 960 150 925 195 925"/>
                <path d="M260 915L255 955L320 960M295 930L295 1000"/>
                <path d="M420 930C385 935 365 960 370 985C385 995 395 990 405 985"/>
                <path d="M465 950C440 945 425 965 430 985C445 995 460 985 475 945L475 990"/>
                <path d="M540 855C515 890 515 950 520 985C530 985 545 940 545 900C545 880 545 865 540 855"/>
                <path d="M590 850C565 890 555 940 560 985C585 980 590 930 590 880C592 865 592 855 590 850"/>
                <path d="M720 850C700 870 695 950 690 1030C685 1070 660 1090 650 1060C650 1040 670 1020 695 1010M675 945L700 935"/>
                <path d="M145 1030C170 985 215 985 218 1030C218 1060 190 1100 155 1100C140 1095 150 1075 185 1072"/>
                <path d="M310 1020L260 1025L255 1060C285 1055 305 1075 295 1090L250 1100"/>
                <path d="M410 1040C380 1035 360 1060 365 1085C380 1095 400 1075 415 1045L420 1090"/>
                <path d="M470 1045C450 1045 440 1065 440 1085C455 1095 465 1075 480 1040L490 1090M510 1000C490 1040 475 1075 480 1095"/>
                <path d="M585 1000L560 1100M595 1030C565 1035 560 1055 575 1060C590 1075 580 1095 550 1090"/>
                <path d="M635 1010C610 1010 605 1040 625 1060C650 1080 640 1095 625 1095C605 1090 610 1065 640 1040C650 1020 645 1010 635 1010"/>
                <path d="M685 1030C655 1035 645 1070 660 1090C680 1090 690 1060 685 1030"/>
                <path d="M655 1155L690 1120"/>
                <path d="M820 985C790 985 770 1000 780 1020C800 1030 825 1010 820 985M750 1115L830 1000M835 1060C815 1060 810 1085 825 1095C845 1090 845 1065 835 1060"/>
                <path d="M915 990L860 995L855 1090L885 1095M860 1040L900 1035"/>
                <path d="M955 1035C925 1035 915 1050 940 1065C960 1080 950 1095 915 1095"/>
                <path d="M970 1100L975 1030C1000 1010 1025 1020 1015 1040L975 1060"/>
              </g>
              <g class="ink red" transform="translate(1000 640) scale(.3333)">
                <path d="M345 125L310 190L355 205M315 130L345 125M310 185L325 170"/>
                <path d="M370 135C400 120 425 145 395 165L365 172C395 175 420 175 410 190L385 195"/>
                <path d="M435 195L455 130C490 115 505 135 495 160L470 180M465 210L440 195"/>
                <path d="M495 155C520 170 525 200 490 220"/>
                <path d="M525 155C510 250 440 420 385 540"/>
                <path d="M515 188L822 218"/>
                <path d="M778 175L808 143C805 220 760 320 720 400C690 450 650 480 640 525"/>
                <path d="M555 232C575 205 635 190 650 220C645 250 610 275 570 272C545 270 560 252 585 262"/>
                <path d="M770 225L705 225L680 230L668 265C690 260 720 265 718 280L665 280"/>
                <path d="M475 295L720 315C740 320 750 335 750 340"/>
                <path d="M580 310C570 325 555 350 550 372L605 378M590 345L565 400"/>
                <path d="M445 383L750 436"/>
                <path d="M580 435L515 440L500 465C530 460 555 470 550 480L490 475"/>
                <path d="M385 478L640 520C670 520 695 530 705 535"/>
                <path d="M195 258L165 265L165 300L190 310M165 280L190 280"/>
                <path d="M245 270C220 270 210 285 235 290C250 300 235 310 210 305"/>
                <path d="M268 322L275 275C295 265 315 280 285 295"/>
                <path d="M295 305L335 305M315 290L310 330"/>
                <path d="M370 285L350 305L390 315L415 295L375 345"/>
                <path d="M210 370L175 375L165 430L205 435M175 400L205 395"/>
                <path d="M265 410C240 410 235 420 250 425C270 430 260 440 230 435"/>
                <path d="M288 440L295 415C315 405 325 420 300 425"/>
                <path d="M315 425L350 425M335 410L330 445"/>
                <path d="M390 412C370 412 365 425 380 430C400 436 405 448 385 448C365 448 370 432 390 425C405 418 405 412 390 412"/>
                <path d="M553 100h8"/>
              </g>
            </svg>
          </div>
          <div class="x-scroll"><span class="sb-btn">⌃</span><span class="x-track"><span class="x-thumb">≡</span></span><span class="sb-btn dn">⌄</span></div>
        </div>
        <div class="x-status">
          <span>Page</span>
          <div class="spin"><span>1</span><i class="updn"><u>⌃</u><u class="dis">⌄</u></i></div>
          <span>de 1</span><i class="vs st"></i>
          <span class="calq">Calque :</span>
          <div class="combo"><span>Calque 1</span><i class="updn2"><u>⌃</u><u>⌄</u></i></div>
        </div>
      </section>
    </div>

    <div class="panel tasks">
      <div class="task"><svg class="ki"><use href="#s-term"/></svg><span>sviardot@ens...</span></div>
      <div class="task"><svg class="ki"><use href="#s-ff"/></svg><span>Pratique du s...</span></div>
      <div class="task act"><svg class="ki"><use href="#s-xapp"/></svg><span>Xournal</span></div>
      <div class="task"><svg class="ki"><use href="#s-term"/></svg><span>sviardot@ens...</span></div>
      <div class="task"><svg class="ki"><use href="#s-info"/></svg><span>iTALC 1.0.13</span></div>
      <div class="task"><svg class="ki"><use href="#s-win"/></svg><span>Téléchargem...</span></div>
      <div class="task"><svg class="ki"><use href="#s-gedit"/></svg><span>ctx_sw.S (~/T...</span></div>
      <svg class="trash"><use href="#s-trash"/></svg>
      <div class="pager"><div class="pg cur"><svg class="pgi"><use href="#s-xapp"/></svg></div><div class="pg"></div><div class="pg"></div><div class="pg"></div></div>
    </div>

    <svg class="cursor" viewBox="0 0 12 18"><path d="M1 1v14l3.500-3.300L7 17l2.500-1.200-2.600-5H11z" fill="#fff" stroke="#000"/></svg>
  </main>

  <footer class="panel pbot">
    <svg class="pi foot"><use href="#s-foot"/></svg>
    <span class="ml6">Applications</span>
    <span class="ml13">Raccourcis</span>
    <span class="ml14">Système</span>
    <svg class="pi ml16"><use href="#s-term"/></svg>
    <svg class="pi ml8"><use href="#s-ff"/></svg>
    <svg class="pi ml12"><use href="#s-emacs"/></svg>
    <i class="grip g1"></i>
    <div class="bt"><svg class="bi"><use href="#s-emacs"/></svg><span>emacs@ensipc131.i...</span></div>
    <div class="bt"><svg class="bi fade"><use href="#s-ff"/></svg><span>[esp stack pointer ch...</span></div>
    <div class="bt"><svg class="bi"><use href="#s-term"/></svg><span>rothm@ensipc131:/u...</span></div>
    <div class="bt act"><svg class="bi"><use href="#s-win"/></svg><span>Démonstration iTALC</span></div>
    <span class="blang">de</span>
    <i class="grip g2"></i>
    <svg class="pi ml4"><use href="#s-bug"/></svg>
    <svg class="pi ml4"><use href="#s-info"/></svg>
    <svg class="pi ml4"><use href="#s-acc"/></svg>
    <svg class="pi ml8 sm"><use href="#s-mute"/></svg>
    <svg class="pi ml8"><use href="#s-net"/></svg>
    <span class="btime">jeu. 19 nov., 10:05</span>
    <b class="buser">Manuel Roth</b>
  </footer>
</div>
</body>
</html>
```

FILE: styles.css
```css
* { box-sizing: border-box; }
html, body { margin: 0; padding: 0; background: #000; }
body { width: 1680px; height: 1050px; overflow: hidden; font-family: "DejaVu Sans Condensed", "DejaVu Sans", sans-serif; font-size: 14px; color: #222; }
.defs { position: absolute; width: 0; height: 0; }
i, em, u { font-style: normal; text-decoration: none; }
button { border: 0; background: none; padding: 0; margin: 0; font: inherit; color: inherit; }
pre { margin: 0; font-family: "DejaVu Sans Mono", monospace; font-size: 12.67px; line-height: 16.2px; color: #222; }

.screen { width: 1680px; height: 1050px; display: flex; flex-direction: column; background: #000; }

/* VNC frame bar */
.vnc { height: 27px; flex: none; display: flex; align-items: center; background: #f7f7f7; border-bottom: 1px solid #000; padding: 4px 0 5px 8px; }
.vnc-chev { width: 10px; height: 6px; flex: none; margin-right: 10px; }
.vnc-title { width: 1568px; height: 20px; background: #ccffcc; display: flex; align-items: center; justify-content: center; gap: 4px; color: #555; font-size: 15px; flex: none; }
.vnc-ic { width: 14px; height: 14px; }
.vnc-btns { width: 80px; height: 26px; margin-top: -1px; flex: none; }

/* remote desktop */
.remote { position: relative; width: 1597px; height: 999px; flex: none; display: flex; flex-direction: column; background: #1f4864; overflow: hidden; filter: blur(.4px); }
.panel { display: flex; align-items: center; flex: none; color: #1c1c1c; white-space: nowrap; }
.panel > * { flex: none; }
.ptop { height: 23px; background: #ecebe9; border-bottom: 1px solid #bdbcb8; position: relative; z-index: 3; padding-bottom: 2px; }
.pi { width: 22px; height: 22px; flex: none; }
.ml4 { margin-left: 4px; } .ml6 { margin-left: 6px; } .ml8 { margin-left: 8px; } .ml12 { margin-left: 12px; } .ml13 { margin-left: 13px; } .ml14 { margin-left: 14px; } .ml16 { margin-left: 16px; }
.ptime { margin-left: 437px; } .puser { margin-left: 40px; } .plang { margin-left: 103px; } .pinfo { margin-left: 240px; }
.workspace { position: relative; height: 953px; flex: none; }
.win { position: absolute; }

/* iTALC */
.italc { left: 1390px; top: 228px; width: 207px; height: 725px; background: #333; overflow: hidden; }
.italc-bar { height: 50px; background: #3c3c3c; display: flex; gap: 3px; padding: 2px 0 3px 0; }
.italc-btn { background: #565654; border-radius: 6px; color: #ddd; font-size: 10.3px; display: flex; flex-direction: column; align-items: center; justify-content: flex-end; position: relative; padding-bottom: 3px; font-family: "DejaVu Sans", sans-serif; flex: none; }
.b1 { width: 101px; padding-left: 18px; } .b2 { width: 92px; } .b3 { width: 40px; }
.mag { width: 30px; height: 30px; position: absolute; top: 3px; left: 32px; }
.asst { width: 16px; height: 28px; position: absolute; top: 3px; left: 58px; }
.tiles { display: grid; grid-template-columns: 200px 200px; grid-auto-rows: 145.5px; gap: 2px 3px; }
.tile { background: #fff; font-family: "DejaVu Sans", sans-serif; overflow: hidden; }
.tile header { height: 21px; background: #e2e2e2; font-weight: bold; font-size: 13px; color: #111; line-height: 20px; padding-left: 13px; position: relative; margin-top: 1px; }
.tile:nth-child(even) { background: linear-gradient(#e2e2e2 21px, #fff 21px); }
.tx { position: absolute; right: 2px; top: 2px; width: 17px; height: 17px; background: #eee; border: 1px solid #888; font-size: 14px; line-height: 15px; text-align: center; font-weight: bold; color: #222; }
.tbody { text-align: center; font-size: 14px; line-height: 16px; padding: 13px 20px 0; }
.tbody b { display: block; margin-top: 10px; }
.mon { width: 58px; height: 60px; display: block; margin: 0 auto; }

/* browser */
.browser { left: 252px; top: 714px; width: 1176px; height: 239px; background: #fff; overflow: hidden; display: flex; }
.b-content { flex: 1; padding: 0 9px; font-family: "DejaVu Serif Condensed", "DejaVu Serif", serif; font-size: 15.35px; line-height: 17px; color: #222; min-width: 0; }
.b-content h3 { margin: 0 0 17px; font-size: 15.35px; font-weight: bold; line-height: 17px; }
.b-content mark { background: #ffff33; color: #000; }
.b-content p { margin: 0 0 14px; }
.b-content a { color: #2222ee; }
.b-scroll { width: 15px; background: #d8d7d3; flex: none; }
.strip { left: 739px; top: 0; width: 111px; height: 20px; background: #eeedeb; }

/* terminal */
.term { left: 973px; top: 0; width: 624px; height: 228px; background: #e9e8e6; display: flex; flex-direction: column; }
.term-head { height: 49px; display: flex; justify-content: flex-end; gap: 8px; padding: 7px 8px 0 0; color: #555; flex: none; }
.wb { width: 12px; height: 14px; font-weight: bold; line-height: 10px; text-align: center; display: block; }
.wb.mn { width: 8px; height: 2px; margin: 11px 2px 0; background: #666; }
.wb.sq { border: 1px solid #666; width: 8px; height: 10px; margin: 2px 2px 0; }
.xb { font-size: 16px; line-height: 14px; }
.term-body { height: 155px; background: #fff; display: flex; }
.term-body pre { flex: 1; padding: 17px 0 0 475px; line-height: 16px; }
.scroll-t { width: 15px; flex: none; background: #e6e5e2; border-left: 1px solid #bbb; display: flex; flex-direction: column; }
.sb-btn { height: 14px; flex: none; background: #efeeec; border: 1px solid #bbb; border-radius: 3px 3px 0 0; font-size: 11px; line-height: 17px; text-align: center; color: #999; }
.sb-btn.dn { border-radius: 0 0 3px 3px; line-height: 6px; }
.sb-thumb { flex: 1; background: #8fb1dc; }

/* gedit */
.gedit { left: 0; top: 0; width: 739px; height: 725px; background: #e9e8e6; border-radius: 4px 4px 0 0; border: 1px solid #aaa; border-top: 1px solid #999; display: flex; flex-direction: column; }
.g-title { height: 25px; display: flex; align-items: center; justify-content: center; color: #666; position: relative; flex: none; }
.gi { position: absolute; left: 5px; top: 3px; width: 16px; height: 18px; }
.g-menu { height: 22px; display: flex; align-items: center; gap: 13.2px; padding-left: 9px; flex: none; border-bottom: 1px solid #d2d1ce; box-sizing: content-box; }
.g-tools { height: 36px; display: flex; align-items: center; padding-left: 9px; flex: none; background: linear-gradient(#f1f0ee, #e5e4e2); border-bottom: 1px solid #cfcecb; }
.ti { width: 22px; height: 24px; flex: none; }
.g-open { margin-left: 12px; } .g-l1 { margin-left: 4px; }
.g-ch { width: 10px; height: 6px; margin-left: 12px; flex: none; }
.g-sv { margin-left: 18px; } .g-l2 { margin-left: 4px; }
.sep { width: 1px; height: 24px; background: #cfcecb; flex: none; }
.g-s1 { margin-left: 10px; } .g-pr { margin-left: 11px; } .g-s2 { margin-left: 10px; } .g-un { margin-left: 14px; }
.g-l3 { margin-left: 5px; color: #999; }
.g-tabs { height: 31px; flex: none; padding: 0 0 0 3px; border-bottom: 1px solid #aaa; }
.g-tab { width: 109px; height: 31px; background: #ecebe9; border: 1px solid #aaa; border-top: 3px solid #6f9bc8; border-bottom: 0; border-radius: 3px 3px 0 0; display: flex; align-items: center; padding-left: 4px; gap: 2px; }
.tabi { width: 16px; height: 18px; flex: none; }
.tabx { width: 12px; height: 12px; margin-left: 8px; flex: none; }
.g-edit { flex: 1; margin: 2px 3px 3px 3px; background: #fff; border: 1px solid #aaa; padding: 0 0 0 4px; overflow: hidden; min-height: 0; }
.g-status { height: 25px; flex: none; display: flex; align-items: center; padding: 0 0 2px 227px; white-space: nowrap; }
.g-ch2 { width: 10px; height: 6px; margin-left: 5px; flex: none; }
.g-wd { margin-left: 14px; }

/* xournal */
.xournal { left: 388px; top: 9px; width: 1062px; height: 893px; background: #e9e8e6; border: 1px solid #111; border-top: 0; border-radius: 6px 6px 0 0; display: flex; flex-direction: column; overflow: hidden; }
.x-title { height: 25px; flex: none; background: linear-gradient(#3a3a3a, #1a1a1a); border-bottom: 2px solid #24507d; color: #e8e8e8; display: flex; align-items: center; justify-content: center; position: relative; padding-right: 42px; }
.xi { position: absolute; left: 6px; top: 6px; width: 14px; height: 14px; }
.x-wb { position: absolute; right: 8px; top: 6px; display: flex; gap: 9px; color: #bbb; font-size: 13px; line-height: 16px; font-weight: bold; }
.x-wb span { width: 11px; text-align: center; }
.x-wb .sq { width: 7px; height: 10px; border: 1px solid #bbb; margin: 3px 2px 0; }
.x-menu { height: 24px; flex: none; display: flex; align-items: center; gap: 12.8px; padding-left: 9px; border-bottom: 1px solid #cfcecb; }
.x-tb { display: flex; align-items: center; flex: none; background: linear-gradient(#f2f1ef, #e5e4e2); border-bottom: 1px solid #cfcecb; }
.t1 { height: 38px; padding-left: 4px; }
.t2 { height: 38px; padding-left: 4px; }
.tb { width: 33.7px; height: 32px; flex: none; display: flex; align-items: center; justify-content: center; border-radius: 3px; border: 1px solid transparent; }
.tb svg { width: 22px; height: 24px; }
.tb svg.rul { height: 11px; width: 22px; }
.tb.on, .dotb.on, .col.on { background: #c8c7c4; border: 1px solid #a5a4a0; }
.tt { font-family: "DejaVu Serif", serif; font-weight: bold; font-size: 20px; color: #111; text-shadow: 1px 0 0 #7a5c2a; }
.vs { width: 1px; height: 32px; margin: 0 1.5px; background: #d0cfcc; flex: none; }
.vs.narrow { margin: 0 0 0 1px; }
.dotb { width: 22.5px; height: 32px; flex: none; display: flex; align-items: center; justify-content: center; border-radius: 3px; border: 1px solid transparent; }
.dot { background: #000; border-radius: 50%; display: block; }
.d1 { width: 4px; height: 4px; } .d2 { width: 8px; height: 8px; } .d3 { width: 12px; height: 12px; }
.col { width: 26.6px; height: 32px; flex: none; display: flex; align-items: center; justify-content: center; border-radius: 3px; border: 1px solid transparent; }
.col i { width: 15px; height: 15px; display: block; border: 1px solid #555; }
.c-black { background: #000; } .c-blue { background: #3333cc; } .c-red { background: #ff0000; } .c-green { background: #008000; } .c-gray { background: #808080; } .c-cyan { background: #00c0ff; } .c-lime { background: #00ff00; } .c-mag { background: #ff00ff; } .c-orange { background: #ff8000; } .c-yellow { background: #ffff00; } .c-white { background: #fff; }
.bigc { width: 31px; }
.bigc i { width: 17px; height: 18px; border: 0; border-bottom: 1px solid #ccc; }
.fontb { width: 96px; height: 32px; flex: none; background: #f1f0ee; border: 1px solid #b5b4b0; border-radius: 4px; display: flex; align-items: center; }
.fontb span { width: 70px; text-align: center; border-right: 1px solid #bbb; line-height: 26px; }
.fontb em { flex: 1; text-align: center; }
.x-view { flex: 1; display: flex; min-height: 0; }
.x-canvas { flex: 1; padding-left: 133px; background: #e9e8e6; overflow: hidden; }
.page { width: 776px; height: 736px; display: block; }
.ink path { fill: none; stroke: #000; stroke-width: 1.7; stroke-linecap: round; stroke-linejoin: round; vector-effect: non-scaling-stroke; }
.ink .thick { stroke-width: 2.2; }
.ink.red path { stroke: #ff0000; }
.x-scroll { width: 15px; flex: none; background: #dedcd8; border-left: 1px solid #bbb; display: flex; flex-direction: column; }
.x-track { flex: 1; display: block; }
.x-thumb { display: block; height: 514px; background: #8fb1dc; color: #55779f; font-size: 12px; text-align: center; line-height: 514px; }
.x-status { height: 32px; flex: none; display: flex; align-items: center; padding: 0 0 3px 9px; border-top: 1px solid #d2d1ce; }
.spin { width: 51px; height: 25px; margin-left: 9px; background: #fff; border: 1px solid #aaa; border-radius: 4px; display: flex; align-items: center; padding-left: 4px; margin-right: 4px; justify-content: space-between; }
.updn { width: 14px; height: 23px; background: #efeeec; border-left: 1px solid #ccc; border-radius: 0 4px 4px 0; display: flex; flex-direction: column; font-size: 10px; line-height: 11px; text-align: center; }
.dis { color: #bbb; }
.st { height: 30px; margin-left: 6px; }
.calq { margin-left: 12px; }
.combo { width: 88px; height: 27px; margin-left: 11px; background: #f1f0ee; border: 1px solid #aaa; border-radius: 4px; display: flex; align-items: center; padding-left: 4px; justify-content: space-between; }
.updn2 { width: 18px; border-left: 1px solid #bbb; display: flex; flex-direction: column; font-size: 9px; line-height: 10px; text-align: center; }

/* bottom */
.tasks { height: 23px; background: #eae9e7; padding-left: 11px; gap: 2.67px; font-size: 14.5px; }
.task { width: 134px; height: 21px; background: #f2f1ef; border: 1px solid #b5b4b0; border-radius: 3px; display: flex; align-items: center; padding-left: 7px; gap: 6px; overflow: hidden; }
.task.act { background: #c8c7c4; }
.ki { width: 16px; height: 17px; flex: none; }
.trash { width: 18px; height: 21px; margin-left: 11px; }
.pager { margin-left: auto; width: 125px; height: 23px; display: flex; background: #aaa; }
.pg { flex: 1; background: #a8a7a3; border-left: 1px solid #d5d4d0; }
.pg.cur { background: #cfdff5; display: flex; align-items: center; justify-content: center; }
.pgi { width: 16px; height: 18px; }
.pbot { height: 24px; width: 1680px; background: #fdfdfd; font-size: 14.7px; filter: blur(.4px); }
.foot { margin-left: 8px; }
.grip { width: 3px; height: 18px; background: repeating-linear-gradient(#aaa 0 2px, transparent 2px 4px); }
.g1 { margin: 0 3px 0 27px; }
.bt { width: 195px; height: 22px; display: flex; align-items: center; gap: 9px; padding-left: 9px; overflow: hidden; }
.bt.act { background: #dcdbd8; border: 1px solid #8f8e8a; border-radius: 3px; margin-left: 6px; }
.bi { width: 16px; height: 17px; flex: none; }
.fade { opacity: .55; }
.blang { margin-left: 32px; }
.g2 { margin-left: 16px; }
.sm { width: 20px; }
.btime { margin-left: 35px; }
.buser { margin-left: 21px; }
.cursor { position: absolute; left: 1472px; top: 294px; width: 12px; height: 18px; z-index: 9; }
```
